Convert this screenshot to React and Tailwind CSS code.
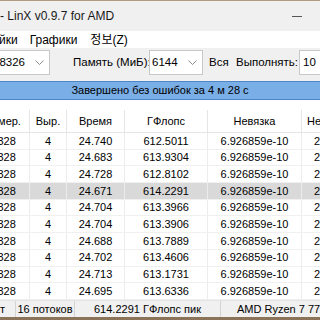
const rows = [
  ["24.740", "612.5011"],
  ["24.683", "613.9304"],
  ["24.728", "612.8102"],
  ["24.671", "614.2291"],
  ["24.704", "613.3966"],
  ["24.704", "613.3906"],
  ["24.688", "613.7889"],
  ["24.702", "613.4606"],
  ["24.713", "613.1731"],
  ["24.695", "613.6336"],
]

function Chevron() {
  return (
    <svg width="9" height="5" viewBox="0 0 9 5" className="shrink-0">
      <polyline points="0.5,0.5 4.5,4.5 8.5,0.5" fill="none" stroke="#8a8a8a" strokeWidth="1" />
    </svg>
  )
}

function Combo({ value, className }) {
  return (
    <div className={"h-[25px] shrink-0 flex items-center justify-between bg-white border border-[#c8c8c8] pr-[5px] " + className}>
      <span>{value}</span>
      <Chevron />
    </div>
  )
}

const cols = ["w-[58px]", "w-[37px]", "w-[58px]", "w-[83px]", "w-[94px]"]

export default function App() {
  const ui = { fontFamily: '"Liberation Sans", Arial, sans-serif' }
  return (
    <div className="w-[320px] h-[320px] overflow-hidden bg-white text-black flex flex-col" style={ui}>
      <div className="h-px bg-[#b09a82]" />

      {/* title bar */}
      <div className="h-[30px] bg-[#f0f0f0] flex items-center justify-between text-[12px] text-[#1a1a1a]">
        <span className="whitespace-nowrap">- LinX v0.9.7 for AMD</span>
        <div className="w-[10px] h-px bg-[#555] mr-[18px]" />
      </div>

      {/* menu */}
      <div className="h-[17px] bg-white flex items-center text-[12px] whitespace-nowrap">
        <span className="ml-[-1px]">йки</span>
        <span className="ml-[12px]">Графики</span>
        <span className="ml-[13px]" style={{ fontFamily: '"Liberation Sans", "Noto Sans CJK KR", sans-serif' }}>정보(Z)</span>
      </div>

      {/* toolbar */}
      <div className="h-[33px] bg-[#f0f0f0] flex items-start pt-[2px] text-[11.5px] whitespace-nowrap">
        <Combo value="28326" className="w-[58px] ml-[-8px] pl-0" />
        <span className="w-[99px] shrink-0 pl-[23px] h-[25px] flex items-center">Память (МиБ):</span>
        <Combo value="6144" className="w-[54px] pl-[2px]" />
        <span className="w-[32px] shrink-0 pl-[6px] h-[25px] flex items-center">Вся</span>
        <span className="w-[64px] shrink-0 pl-[1px] h-[25px] flex items-center">Выполнять:</span>
        <div className="h-[25px] flex-1 bg-white border border-[#c8c8c8] border-r-0 flex items-center pl-[3px]">10</div>
      </div>

      {/* progress / status */}
      <div className="h-[19px] bg-[#7aaee6] border-y border-[#4d86c8] flex items-center justify-center text-[11px] whitespace-nowrap">
        Завершено без ошибок за 4 м 28 с
      </div>

      {/* table */}
      <div className="flex-1 flex flex-col text-[11px] whitespace-nowrap">
        <div className="h-[10px]" />
        <div className="h-[23px] flex ml-[-28px] border-b border-[#e5e5e5]">
          {["Размер.", "Выр.", "Время", "ГФлопс", "Невязка"].map((t, i) => (
            <div key={i} className={"shrink-0 flex items-center justify-center border-r border-[#e5e5e5] " + cols[i]}>{t}</div>
          ))}
          <div className="shrink-0 w-[90px] flex items-center pl-[5px]">Невязка (н.)</div>
        </div>
        {rows.map(([time, gf], i) => (
          <div
            key={i}
            className={"h-[16.7px] shrink-0 flex ml-[-28px] border-b border-[#f0f0f0] " + (i === 3 ? "bg-[#d9d9d9]" : "")}
          >
            {["28328", "4", time, gf, "6.926859e-10"].map((v, j) => (
              <div key={j} className={"shrink-0 flex items-center justify-center border-r border-[#ececec] " + cols[j]}>{v}</div>
            ))}
            <div className="shrink-0 w-[90px] flex items-center pl-[12px]">2.448715e-02</div>
          </div>
        ))}
        <div className="flex-1" />
      </div>

      {/* status bar */}
      <div className="h-[17px] bg-[#f0f0f0] flex items-center text-[11px] whitespace-nowrap border-t border-[#e3e3e3]">
        <div className="w-[15px] shrink-0 h-full flex items-center">т</div>
        <div className="w-[59px] shrink-0 h-full flex items-center justify-center border-l border-[#d4d4d4]">16 потоков</div>
        <div className="w-[146px] shrink-0 h-full flex items-center justify-center border-l border-[#d4d4d4]">614.2291 ГФлопс пик</div>
        <div className="flex-1 h-full flex items-center pl-[16px] border-l border-[#d4d4d4]">AMD Ryzen 7 7700X</div>
      </div>
      <div className="h-[3px] bg-[#8a7358]" />
    </div>
  )
}
